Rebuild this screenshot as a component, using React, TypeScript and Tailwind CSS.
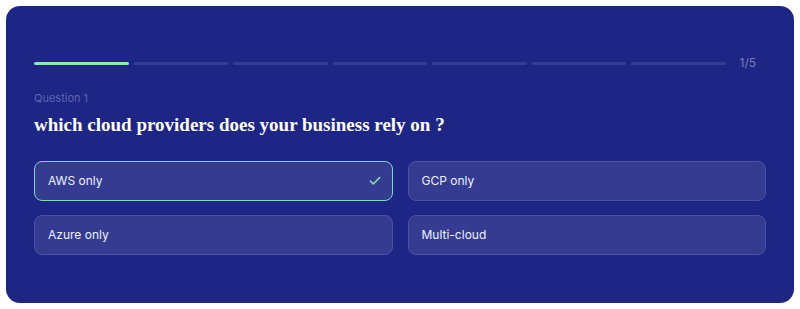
import React, { useState } from 'react';

const options = ['AWS only', 'GCP only', 'Azure only', 'Multi-cloud'];

export default function App() {
    const [selected, setSelected] = useState(0);
    const steps = 7;
    const current = 1;

    return (
        <div className="w-[800px] h-[309px] bg-white p-[6px] font-['Inter',sans-serif]">
            <div className="h-[297px] rounded-[14px] bg-[#1d2585] px-[28px] pt-[51px]">
                {/* Progress */}
                <div className="flex items-center">
                    <div className="flex w-[692px] gap-[5px]">
                        {Array.from({ length: steps }).map((_, i) => (
                            <div
                                key={i}
                                className={`h-[3px] flex-1 rounded-full ${i < current ? 'bg-[#86efac]' : 'bg-[#353d93]'}`}
                            />
                        ))}
                    </div>
                    <span className="ml-auto mr-[10px] text-[12px] text-[#7a80bd] leading-none">1/5</span>
                </div>

                <p className="mt-[21px] text-[11px] leading-[16px] text-[#5e66ad]">Question 1</p>
                <h1 className="mt-[7px] font-['Liberation_Serif',serif] text-[19px] font-bold leading-[24px] text-white">
                    which cloud providers does your business rely on ?
                </h1>

                {/* Options */}
                <div className="mt-[24px] grid grid-cols-2 gap-x-[15px] gap-y-[14px]">
                    {options.map((opt, i) => {
                        const active = selected === i;
                        return (
                            <button
                                key={opt}
                                onClick={() => setSelected(i)}
                                className={`flex h-[40px] items-center justify-between rounded-[8px] border bg-[#343b90] pl-[13px] pr-[10px] text-left text-[12px] text-[#eef0ff] ${active ? 'border-[#7ed9c0]' : 'border-[#4a52a3]'}`}
                            >
                                <span>{opt}</span>
                                {active && (
                                    <svg width="14" height="14" viewBox="0 0 24 24" fill="none" stroke="#86efac" strokeWidth="2.5" strokeLinecap="round" strokeLinejoin="round">
                                        <path d="M20 6 9 17l-5-5" />
                                    </svg>
                                )}
                            </button>
                        );
                    })}
                </div>
            </div>
        </div>
    );
}
